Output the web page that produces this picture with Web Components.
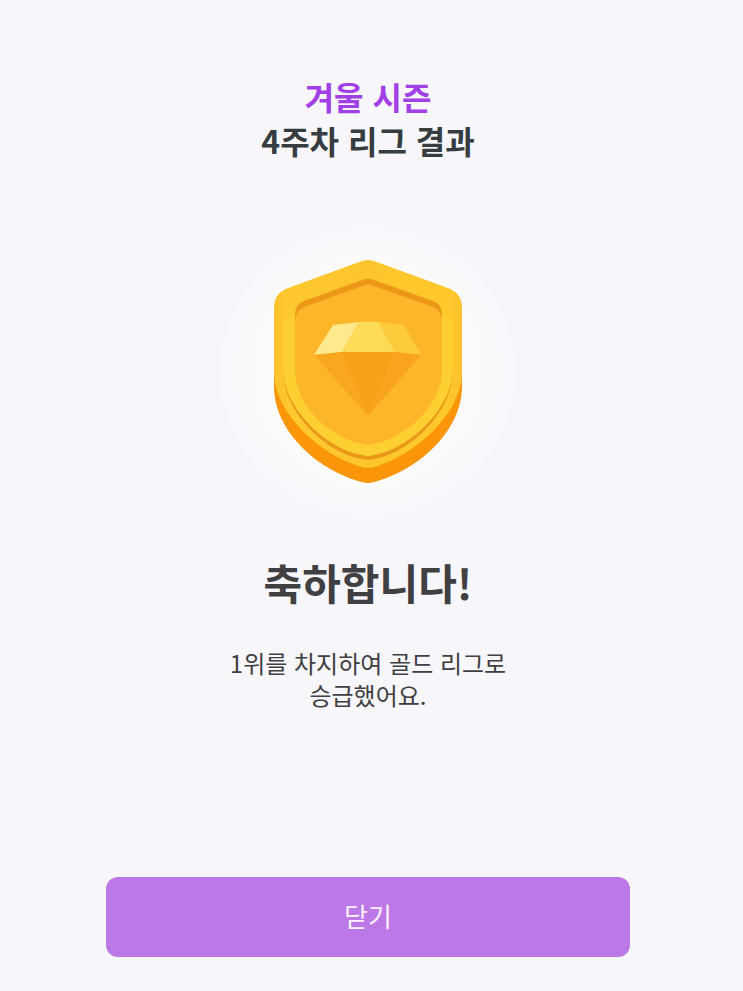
<!DOCTYPE html>
<html lang="ko">
<head>
<meta charset="utf-8">
<meta name="viewport" content="width=device-width, initial-scale=1">
<title>리그 결과</title>
<style>
  body {
    margin: 0;
    background-color: #f7f6fb;
    font-family: "Noto Sans CJK KR", sans-serif;
  }
</style>
</head>
<body>
<league-result>
  <league-title slot="title">
    <span slot="season">겨울 시즌</span>
    4주차 리그 결과
  </league-title>
  <league-medal slot="medal"></league-medal>
  <league-message slot="message">
    <span slot="heading">축하합니다!</span>
    1위를 차지하여 골드 리그로<br>승급했어요.
  </league-message>
  <league-button slot="action">닫기</league-button>
</league-result>

<script>
const createTemplate = (html) => {
  const template = document.createElement("template");
  template.innerHTML = html;
  return template;
};

const resultTemplate = createTemplate(`
  <style>
    :host {
      display: block;
    }
    main {
      box-sizing: border-box;
      min-height: 100vh;
      display: flex;
      flex-direction: column;
      padding: 74px 113px 34px 106px;
      text-align: center;
    }
    .medal {
      display: flex;
      justify-content: center;
      padding: 58px 0 26px;
    }
    .action {
      margin-top: auto;
      padding-top: 32px;
    }
  </style>
  <main>
    <slot name="title"></slot>
    <div class="medal"><slot name="medal"></slot></div>
    <slot name="message"></slot>
    <div class="action"><slot name="action"></slot></div>
  </main>
`);

const titleTemplate = createTemplate(`
  <style>
    :host {
      display: block;
    }
    h1 {
      margin: 0;
      color: #363d40;
      font-size: 32px;
      line-height: 44px;
      font-weight: bold;
    }
    .season {
      display: block;
      color: #a040e6;
    }
  </style>
  <h1><span class="season"><slot name="season"></slot></span><slot></slot></h1>
`);

const medalTemplate = createTemplate(`
  <style>
    :host {
      display: block;
    }
    svg {
      display: block;
      width: 304px;
      height: 304px;
    }
  </style>
  <svg viewBox="216 220 304 304" aria-hidden="true">
    <defs>
      <radialGradient id="halo">
        <stop offset="0" stop-color="#fdfdfe"/>
        <stop offset="0.7" stop-color="#fbfbfd"/>
        <stop offset="0.94" stop-color="#f9f8fc"/>
        <stop offset="1" stop-color="#f7f6fb"/>
      </radialGradient>
      <linearGradient id="rim" x1="0" x2="1" y1="0" y2="0">
        <stop offset="0" stop-color="#fec12d"/>
        <stop offset="0.09" stop-color="#fec82e"/>
        <stop offset="0.5" stop-color="#fec62c"/>
        <stop offset="0.91" stop-color="#fec82b"/>
        <stop offset="1" stop-color="#fec12d"/>
      </linearGradient>
      <linearGradient id="ring" x1="0" x2="0" y1="0" y2="1">
        <stop offset="0" stop-color="#fecf30" stop-opacity="0"/>
        <stop offset="0.4" stop-color="#fecf30"/>
      </linearGradient>
    </defs>
    <circle cx="368" cy="372" r="152" fill="url(#halo)"/>
    <!-- thickness -->
    <path fill="#fb960a" d="M274 350V386C274 434 322 472 362 482Q368 484 374 482C414 472 462 434 462 386V350Z"/>
    <!-- face and rim -->
    <path fill="url(#rim)" d="M362 261Q368 259 374 261L448 288Q462 293 462 308V372C462 414 414 456 374 467Q368 469 362 467C322 456 274 414 274 372V308Q274 293 288 288Z"/>
    <path fill="#e9981a" d="M283 370C283 412 326 453 362 459Q368 461 374 459C410 453 453 412 453 370Z"/>
    <path fill="#fecf30" d="M283 370C284 408 326 449 362 455Q368 457 374 455C410 449 452 408 453 370Z"/>
    <path fill="url(#ring)" d="M283 300H453V371H283Z"/>
    <!-- recess -->
    <path fill="#ec9718" d="M362 280Q368 278 374 280L433 301Q442 304 442 315V330H295V315Q295 304 304 301Z"/>
    <path fill="#fdb62a" d="M362 286Q368 283 374 286L433 307Q440 310 442 319V370C442 404 408 437 374 444Q368 446 362 444C328 437 295 404 295 370V319Q297 310 304 307Z"/>
    <!-- gem -->
    <path fill="#feea8c" d="M333 325L359 322L342 352L314 355Z"/>
    <path fill="#fedb59" d="M359 322Q368 321 378 322L395 352H342Z"/>
    <path fill="#fecb3d" d="M378 322L404 325L421 355L395 352Z"/>
    <path fill="#f9a721" d="M314 355L342 352L368 416Z"/>
    <path fill="#f9a01b" d="M342 352H395L368 416Z"/>
    <path fill="#f9a31e" d="M395 352L421 355L368 416Z"/>
  </svg>
`);

const messageTemplate = createTemplate(`
  <style>
    :host {
      display: block;
      color: #404042;
    }
    h2 {
      margin: 0 0 33px;
      font-size: 42px;
      line-height: 64px;
      font-weight: bold;
    }
    p {
      margin: 0;
      font-size: 24px;
      line-height: 32px;
    }
  </style>
  <h2><slot name="heading"></slot></h2>
  <p><slot></slot></p>
`);

const buttonTemplate = createTemplate(`
  <style>
    :host {
      display: block;
    }
    button {
      box-sizing: border-box;
      display: block;
      width: 100%;
      height: 80px;
      padding: 0 0 4px;
      border: 0;
      border-radius: 12px;
      background-color: #bd78e7;
      color: #fcf2ff;
      font-family: inherit;
      font-size: 26px;
      cursor: pointer;
    }
  </style>
  <button type="button"><slot></slot></button>
`);

class LeagueElement extends HTMLElement {
  constructor(template) {
    super();
    this.attachShadow({ mode: "open" });
    this.shadowRoot.appendChild(template.content.cloneNode(true));
  }
}

class LeagueResult extends LeagueElement {
  constructor() {
    super(resultTemplate);
  }
}

class LeagueTitle extends LeagueElement {
  constructor() {
    super(titleTemplate);
  }
}

class LeagueMedal extends LeagueElement {
  constructor() {
    super(medalTemplate);
  }
}

class LeagueMessage extends LeagueElement {
  constructor() {
    super(messageTemplate);
  }
}

class LeagueButton extends LeagueElement {
  constructor() {
    super(buttonTemplate);
  }
}

window.customElements.define("league-result", LeagueResult);
window.customElements.define("league-title", LeagueTitle);
window.customElements.define("league-medal", LeagueMedal);
window.customElements.define("league-message", LeagueMessage);
window.customElements.define("league-button", LeagueButton);
</script>
</body>
</html>
